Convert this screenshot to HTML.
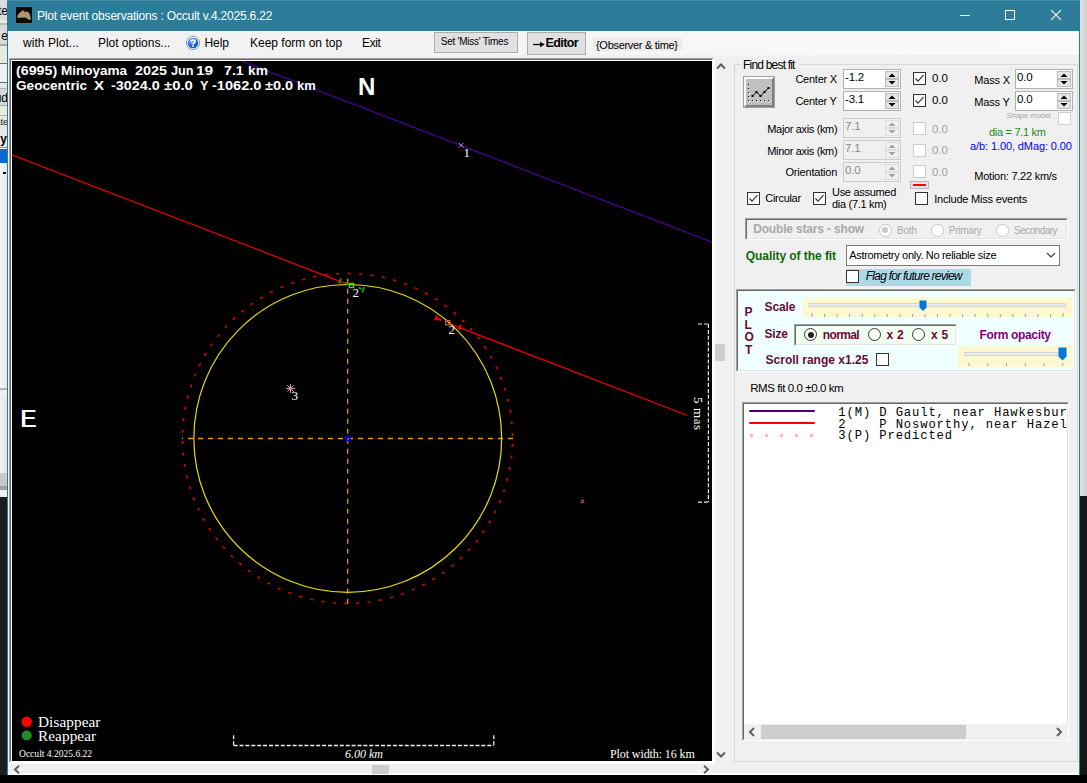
<!DOCTYPE html>
<html><head><meta charset="utf-8"><title>Plot event observations</title>
<style>
html,body{margin:0;padding:0}
body{width:1087px;height:783px;position:relative;overflow:hidden;background:#000;font-family:"Liberation Sans",sans-serif}
.a{position:absolute}
.t{position:absolute;white-space:pre}
</style></head><body>
<div class="a" style="left:0px;top:0px;width:7px;height:783px;background:#1e1e1e"></div>
<div class="a" style="left:0px;top:0px;width:7px;height:20px;background:#dcdcdc"></div>
<div class="a" style="left:0px;top:20px;width:7px;height:3px;background:#e6eede"></div>
<div class="a" style="left:0px;top:23px;width:7px;height:2px;background:#b8b8b8"></div>
<div class="a" style="left:0px;top:25px;width:7px;height:19px;background:#dadada"></div>
<div class="a" style="left:0px;top:44px;width:7px;height:2px;background:#a8a8a8"></div>
<div class="a" style="left:0px;top:46px;width:7px;height:17px;background:#e4ecdc"></div>
<div class="a" style="left:0px;top:63px;width:7px;height:1px;background:#707070"></div>
<div class="a" style="left:0px;top:64px;width:7px;height:18px;background:#f0f0f0"></div>
<div class="a" style="left:0px;top:82px;width:7px;height:1px;background:#707070"></div>
<div class="a" style="left:0px;top:83px;width:7px;height:5px;background:#e4ecdc"></div>
<div class="a" style="left:0px;top:88px;width:7px;height:1px;background:#b0b0b0"></div>
<div class="a" style="left:0px;top:89px;width:7px;height:16px;background:#d6d6d6"></div>
<div class="a" style="left:0px;top:105px;width:7px;height:1px;background:#a8a8a8"></div>
<div class="a" style="left:0px;top:106px;width:7px;height:9px;background:#e4ecdc"></div>
<div class="a" style="left:0px;top:115px;width:7px;height:1px;background:#b0b0b0"></div>
<div class="a" style="left:0px;top:116px;width:7px;height:15px;background:#e6e6e6"></div>
<div class="a" style="left:0px;top:131px;width:7px;height:16px;background:#e8e8e8"></div>
<div class="a" style="left:0px;top:147px;width:7px;height:1px;background:#909090"></div>
<div class="a" style="left:0px;top:148px;width:7px;height:1px;background:#fff"></div>
<div class="a" style="left:0px;top:149px;width:7px;height:14px;background:#0a68d0"></div>
<div class="a" style="left:0px;top:163px;width:7px;height:225px;background:linear-gradient(to right,#f4f4f4,#e6e6e6)"></div>
<div class="a" style="left:0px;top:388px;width:7px;height:2px;background:#b0b0b0"></div>
<div class="a" style="left:0px;top:390px;width:7px;height:7px;background:#efefef"></div>
<div class="a" style="left:0px;top:397px;width:7px;height:76px;background:linear-gradient(to right,#f2f2f2,#e4e4e4)"></div>
<div class="a" style="left:0px;top:473px;width:7px;height:13px;background:#c8c8c8"></div>
<div class="a" style="left:0px;top:486px;width:7px;height:4px;background:#a0a0a0"></div>
<div class="a" style="left:0px;top:490px;width:7px;height:7px;background:#f0f0f0"></div>
<div class="a" style="left:0;top:0;width:7px;height:150px;overflow:hidden"><div class="t" style="right:-1px;top:5px;font:12px/12px 'Liberation Sans';color:#000">te</div><div class="t" style="right:-1px;top:30px;font:12px/12px 'Liberation Sans';color:#000">e</div><div class="t" style="right:-1px;top:92px;font:12px/12px 'Liberation Sans';color:#000">ud</div><div class="t" style="right:-1px;top:118px;font:9px/9px 'Liberation Sans';color:#222">ate</div><div class="t" style="right:0px;top:133px;font:bold 12px/12px 'Liberation Sans';color:#000">y</div></div>
<div class="a" style="left:3px;top:172px;width:3px;height:2px;background:#111"></div>
<div class="a" style="left:1080px;top:0px;width:7px;height:496px;background:linear-gradient(to right,#e2e2e2,#cfcfcf)"></div>
<div class="a" style="left:1080px;top:496px;width:7px;height:287px;background:#161616"></div>
<div class="a" style="left:0px;top:775px;width:1087px;height:8px;background:#000"></div>
<div class="a" style="left:7px;top:0px;width:1073px;height:775px;background:#f0f0f0;border-left:1px solid #2b7b9b;border-right:1px solid #2b7b9b;box-sizing:border-box"></div>
<div class="a" style="left:7px;top:0px;width:1073px;height:31px;background:#2d7c9a"></div>
<div class="a" style="left:7px;top:0px;width:1073px;height:1px;background:#4a8fab"></div>
<svg class="a" style="left:16px;top:7px" width="16" height="16" viewBox="0 0 16 16">
<rect width="16" height="16" fill="#0e0b07"/>
<path d="M1.2 9.6 C1.8 7.8 3 6.2 4.5 5.2 C5.5 4.4 6.3 3.4 7 3.3 C7.8 3.4 8.1 4.5 8.6 5.1 C9.5 4.6 11.2 4.4 12.3 5.2 C13.4 6.2 14.2 8.5 14.6 10.6 C14.9 12 14.6 13 13.8 12.9 C12.5 12.6 11 11.5 9.8 10.8 C8.8 10.7 8 10.5 7 10.6 C5 10.6 3.2 11.2 2.2 10.8 C1.6 10.5 1.1 10.2 1.2 9.6 Z" fill="#b29470"/>
</svg>
<div class="t" style="left:37.00px;top:10.30px;font:normal 400 12px 'Liberation Sans';line-height:12px;color:#fff;letter-spacing:-0.190px;">Plot event observations : Occult v.4.2025.6.22</div>
<div class="a" style="left:960px;top:15px;width:10px;height:1px;background:#fff"></div>
<div class="a" style="left:1005px;top:10px;width:10px;height:10px;border:1px solid #fff;box-sizing:border-box"></div>
<svg class="a" style="left:1051px;top:10px" width="10" height="10" viewBox="0 0 10 10"><path d="M0 0 L10 10 M10 0 L0 10" stroke="#fff" stroke-width="1.1"/></svg>
<div class="a" style="left:8px;top:31px;width:1071px;height:24px;background:linear-gradient(to right,#f0f0f0,#fafafa)"></div>
<div class="a" style="left:8px;top:31px;width:1071px;height:1px;background:#fff"></div>
<div class="t" style="left:23.00px;top:37.00px;font:normal 400 12px 'Liberation Sans';line-height:12px;color:#000;letter-spacing:0.050px;">with Plot...</div>
<div class="t" style="left:98.00px;top:37.00px;font:normal 400 12px 'Liberation Sans';line-height:12px;color:#000;letter-spacing:-0.030px;">Plot options...</div>
<svg class="a" style="left:186px;top:36px" width="14" height="14" viewBox="0 0 14 14">
<defs><radialGradient id="hg" cx="0.4" cy="0.3" r="0.8"><stop offset="0" stop-color="#8fb8ff"/><stop offset="0.6" stop-color="#2a62d8"/><stop offset="1" stop-color="#1040a8"/></radialGradient></defs>
<circle cx="7" cy="7" r="6.6" fill="#fff" stroke="#5a84d0" stroke-width="0.8"/>
<circle cx="7" cy="7" r="5.3" fill="url(#hg)"/>
<path d="M5 5.4 C5 3.6 9 3.6 9 5.4 C9 6.8 7 6.9 7 8.4" stroke="#fff" stroke-width="1.5" fill="none"/>
<rect x="6.2" y="9.4" width="1.6" height="1.6" fill="#fff"/>
</svg>
<div class="t" style="left:204.50px;top:37.00px;font:normal 400 12px 'Liberation Sans';line-height:12px;color:#000;letter-spacing:-0.100px;">Help</div>
<div class="t" style="left:250.00px;top:37.00px;font:normal 400 12px 'Liberation Sans';line-height:12px;color:#000;letter-spacing:0.000px;">Keep form on top</div>
<div class="t" style="left:362.00px;top:37.00px;font:normal 400 12px 'Liberation Sans';line-height:12px;color:#000;letter-spacing:-0.350px;">Exit</div>
<div class="a" style="left:434px;top:32px;width:84px;height:21px;background:#e1e1e1;border:1px solid #adadad;box-sizing:border-box"></div>
<div class="t" style="left:440.80px;top:37.30px;font:normal 400 10px 'Liberation Sans';line-height:10px;color:#000;letter-spacing:-0.266px;">Set 'Miss' Times</div>
<div class="a" style="left:527px;top:32px;width:59px;height:23px;background:#e1e1e1;border:1px solid #adadad;box-sizing:border-box"></div>
<svg class="a" style="left:533px;top:41px" width="13" height="7" viewBox="0 0 13 7"><path d="M0 3.5 H9" stroke="#000" stroke-width="1.3"/><path d="M7 0.8 L11.8 3.5 L7 6.2 Z" fill="#000"/></svg>
<div class="t" style="left:545.60px;top:37.17px;font:normal 700 12.5px 'Liberation Sans';line-height:12.5px;color:#000;letter-spacing:-0.609px;">Editor</div>
<div class="a" style="left:593px;top:38px;width:89px;height:13px;background:#ececec"></div>
<div class="t" style="left:596.00px;top:39.85px;font:normal 400 11px 'Liberation Sans';line-height:11px;color:#000;letter-spacing:-0.300px;">{Observer &amp; time}</div>
<div class="a" style="left:9px;top:58px;width:706px;height:706px;background:#fff"></div>
<div class="a" style="left:9px;top:58px;width:704px;height:1px;background:#a0a0a0"></div>
<div class="a" style="left:9px;top:58px;width:1px;height:704px;background:#a0a0a0"></div>
<div class="a" style="left:10px;top:59px;width:702px;height:1px;background:#696969"></div>
<div class="a" style="left:10px;top:59px;width:1px;height:702px;background:#696969"></div>
<div class="a" style="left:12px;top:61px;width:700px;height:700px;background:#000"></div>
<svg class="a" style="left:716px;top:62px" width="10" height="8" viewBox="0 0 10 8"><path d="M1 6.5 L5 2.5 L9 6.5" stroke="#606060" stroke-width="2" fill="none"/></svg>
<div class="a" style="left:715px;top:344px;width:10px;height:17px;background:#cdcdcd"></div>
<svg class="a" style="left:716px;top:751px" width="10" height="8" viewBox="0 0 10 8"><path d="M1 1.5 L5 5.5 L9 1.5" stroke="#606060" stroke-width="2" fill="none"/></svg>
<div class="a" style="left:8px;top:773px;width:1071px;height:2px;background:#fff"></div>
<svg class="a" style="left:13px;top:765px" width="8" height="9" viewBox="0 0 8 9"><path d="M6 0.8 L2 4.5 L6 8.2" stroke="#606060" stroke-width="2" fill="none"/></svg>
<div class="a" style="left:372px;top:765px;width:17px;height:9px;background:#cdcdcd"></div>
<svg class="a" style="left:702px;top:765px" width="8" height="9" viewBox="0 0 8 9"><path d="M2 0.8 L6 4.5 L2 8.2" stroke="#606060" stroke-width="2" fill="none"/></svg>
<svg class="a" style="left:12px;top:61px" width="700" height="700" viewBox="12 61 700 700"><line x1="230" y1="56.65" x2="720" y2="245.16" stroke="#5000a0" stroke-width="1.1"/><line x1="0" y1="150.17" x2="344.5" y2="283.11" stroke="#f00000" stroke-width="1.2"/><line x1="448" y1="323.05" x2="687.6" y2="415.51" stroke="#f00000" stroke-width="1.3"/><circle cx="347.5" cy="438.4" r="165" fill="none" stroke="#e00000" stroke-width="1.6" stroke-dasharray="3 8.519" stroke-dashoffset="-5.6"/><circle cx="347.75" cy="438.4" r="153.9" fill="none" stroke="#e8dc00" stroke-width="1.2"/><path d="M513 438.5 L182 438.5" stroke="#e89a10" stroke-width="1.3" stroke-dasharray="5 5"/><path d="M347.7 603.7 L347.7 273.7" stroke="#e89a10" stroke-width="1.3" stroke-dasharray="5 5"/><circle cx="347.7" cy="438.5" r="2.2" fill="none" stroke="#0000ff" stroke-width="1.7"/><path d="M344.5 282.4 L349 284.8" stroke="#1a9a1a" stroke-width="1.5"/><path d="M341 278.4 L339 283.4" stroke="#1a9a1a" stroke-width="1.8"/><path d="M358.5 287.5 L362 289.2 M364.4 287 L362.2 292.6" stroke="#1a9a1a" stroke-width="1.8"/><rect x="349.4" y="283.4" width="4.2" height="4.2" fill="none" stroke="#10ff10" stroke-width="1.2"/><rect x="350.8" y="285" width="2" height="1.2" fill="#ff2000"/><path d="M436.8 315.5 L435.4 320.5 M435.6 318.2 L441.4 320" stroke="#ff0000" stroke-width="2"/><path d="M460.7 324.8 L459 329.8" stroke="#ff0000" stroke-width="2"/><rect x="445.6" y="320.6" width="4.4" height="4.2" fill="none" stroke="#c85a40" stroke-width="1.2"/><path d="M458.8 142.9 L463.6 147.7 M463.6 142.9 L458.8 147.7" stroke="#a8a8a8" stroke-width="1"/><path d="M286 388.4 H295 M290.4 384 V393 M287.2 385.2 L293.6 391.6 M293.6 385.2 L287.2 391.6" stroke="#b8b8b8" stroke-width="1"/><circle cx="290.4" cy="388.4" r="1.9" fill="#ff6ab0"/><circle cx="582.5" cy="501.4" r="1.4" fill="none" stroke="#ff6ab0" stroke-width="0.9"/><path d="M698 324 H708.4 M708.4 324 V502.1 M698 502.1 H708.4" fill="none" stroke="#e8e8e8" stroke-width="1.2" stroke-dasharray="4 1.9"/><path d="M233.6 735.3 V745.5 M233.6 745.5 H493.8 M493.8 735.3 V745.5" fill="none" stroke="#f0f0f0" stroke-width="1.3" stroke-dasharray="4 1.9"/><circle cx="26.7" cy="721.7" r="5.2" fill="#ff0000"/><circle cx="26.7" cy="735.5" r="5.1" fill="#228b22"/></svg>
<div class="t" style="left:15.60px;top:64.50px;font:normal 700 12px 'Liberation Sans';line-height:12px;color:#fff;letter-spacing:0.000px;transform:scaleX(1.1876);transform-origin:0 0;">(6995)</div>
<div class="t" style="left:60.80px;top:64.50px;font:normal 700 12px 'Liberation Sans';line-height:12px;color:#fff;letter-spacing:0.000px;transform:scaleX(1.1270);transform-origin:0 0;">Minoyama</div>
<div class="t" style="left:134.90px;top:64.50px;font:normal 700 12px 'Liberation Sans';line-height:12px;color:#fff;letter-spacing:0.000px;transform:scaleX(1.1990);transform-origin:0 0;">2025</div>
<div class="t" style="left:170.90px;top:64.50px;font:normal 700 12px 'Liberation Sans';line-height:12px;color:#fff;letter-spacing:0.000px;transform:scaleX(1.0569);transform-origin:0 0;">Jun</div>
<div class="t" style="left:195.60px;top:64.50px;font:normal 700 12px 'Liberation Sans';line-height:12px;color:#fff;letter-spacing:0.000px;transform:scaleX(1.2871);transform-origin:0 0;">19</div>
<div class="t" style="left:223.80px;top:64.50px;font:normal 700 12px 'Liberation Sans';line-height:12px;color:#fff;letter-spacing:0.000px;transform:scaleX(1.1818);transform-origin:0 0;">7.1</div>
<div class="t" style="left:248.10px;top:64.50px;font:normal 700 12px 'Liberation Sans';line-height:12px;color:#fff;letter-spacing:0.000px;transform:scaleX(1.1455);transform-origin:0 0;">km</div>
<div class="t" style="left:15.90px;top:80.10px;font:normal 700 12px 'Liberation Sans';line-height:12px;color:#fff;letter-spacing:0.000px;transform:scaleX(1.1331);transform-origin:0 0;">Geocentric</div>
<div class="t" style="left:93.90px;top:80.10px;font:normal 700 12px 'Liberation Sans';line-height:12px;color:#fff;letter-spacing:0.000px;transform:scaleX(1.2625);transform-origin:0 0;">X</div>
<div class="t" style="left:110.60px;top:80.10px;font:normal 700 12px 'Liberation Sans';line-height:12px;color:#fff;letter-spacing:0.000px;transform:scaleX(1.1968);transform-origin:0 0;">-3024.0</div>
<div class="t" style="left:163.50px;top:80.10px;font:normal 700 12px 'Liberation Sans';line-height:12px;color:#fff;letter-spacing:0.000px;transform:scaleX(1.2376);transform-origin:0 0;">±0.0</div>
<div class="t" style="left:199.50px;top:80.10px;font:normal 700 12px 'Liberation Sans';line-height:12px;color:#fff;letter-spacing:0.000px;transform:scaleX(1.0500);transform-origin:0 0;">Y</div>
<div class="t" style="left:212.10px;top:80.10px;font:normal 700 12px 'Liberation Sans';line-height:12px;color:#fff;letter-spacing:0.000px;transform:scaleX(1.2139);transform-origin:0 0;">-1062.0</div>
<div class="t" style="left:265.00px;top:80.10px;font:normal 700 12px 'Liberation Sans';line-height:12px;color:#fff;letter-spacing:0.000px;transform:scaleX(1.2122);transform-origin:0 0;">±0.0</div>
<div class="t" style="left:296.80px;top:80.10px;font:normal 700 12px 'Liberation Sans';line-height:12px;color:#fff;letter-spacing:0.000px;transform:scaleX(1.0795);transform-origin:0 0;">km</div>
<div class="t" style="left:358.25px;top:75.65px;font:normal 700 23px 'Liberation Sans';line-height:23px;color:#fff;letter-spacing:0.000px;transform:scaleX(1.0467);transform-origin:0 0;">N</div>
<div class="t" style="left:20.36px;top:407.65px;font:normal 400 23px 'Liberation Sans';line-height:23px;color:#fff;letter-spacing:0.000px;transform:scaleX(1.0357);transform-origin:0 0;text-shadow:0.9px 0 0 #fff;">E</div>
<div class="t" style="left:463.50px;top:146.11px;font:normal 400 13px 'Liberation Serif';line-height:13px;color:#fff;letter-spacing:0.000px;">1</div>
<div class="t" style="left:291.50px;top:389.21px;font:normal 400 13px 'Liberation Serif';line-height:13px;color:#fff;letter-spacing:0.000px;">3</div>
<div class="t" style="left:352.50px;top:286.11px;font:normal 400 13px 'Liberation Serif';line-height:13px;color:#fff;letter-spacing:0.000px;">2</div>
<div class="t" style="left:448.60px;top:323.01px;font:normal 400 13px 'Liberation Serif';line-height:13px;color:#fff;letter-spacing:0.000px;">2</div>
<div class="t" style="left:38.00px;top:714.30px;font:normal 400 15.3px 'Liberation Serif';line-height:15.3px;color:#fff;letter-spacing:0.050px;">Disappear</div>
<div class="t" style="left:38.00px;top:728.20px;font:normal 400 15.3px 'Liberation Serif';line-height:15.3px;color:#fff;letter-spacing:0.050px;">Reappear</div>
<div class="t" style="left:19.20px;top:748.47px;font:normal 400 11px 'Liberation Serif';line-height:11px;color:#fff;letter-spacing:0.000px;transform:scaleX(0.8673);transform-origin:0 0;">Occult 4.2025.6.22</div>
<div class="t" style="left:345.00px;top:747.74px;font:italic 400 12px 'Liberation Serif';line-height:12px;color:#fff;letter-spacing:0.000px;">6.00 km</div>
<div class="t" style="left:610.00px;top:747.74px;font:normal 400 12px 'Liberation Serif';line-height:12px;color:#fff;letter-spacing:-0.100px;">Plot width: 16 km</div>
<div class="t" style="left:692px;top:397px;width:12px;height:34px;"><div style="position:absolute;left:12px;top:0;transform-origin:0 0;transform:rotate(90deg);font:13px/12px 'Liberation Serif';color:#fff;white-space:pre;letter-spacing:0.6px">5 mas</div></div>
<div class="a" style="left:734px;top:64px;width:1px;height:698px;background:#d8d8d8"></div>
<div class="a" style="left:734px;top:64px;width:344px;height:1px;background:#d8d8d8"></div>
<div class="a" style="left:1077px;top:64px;width:1px;height:698px;background:#d8d8d8"></div>
<div class="a" style="left:734px;top:761px;width:344px;height:1px;background:#d8d8d8"></div>
<div class="a" style="left:741px;top:58px;width:58px;height:12px;background:#f0f0f0"></div>
<div class="t" style="left:743.10px;top:58.80px;font:normal 400 12px 'Liberation Sans';line-height:12px;color:#000;letter-spacing:-0.808px;">Find best fit</div>
<svg class="a" style="left:743px;top:76px" width="32" height="32" viewBox="0 0 32 32">
<rect width="32" height="32" fill="#a0a0a0"/><rect x="1" y="1" width="30" height="30" fill="#fff"/>
<path d="M31 1 V31 H1 L3 29 H29 V3 Z" fill="#808080"/><rect x="3" y="3" width="26" height="26" fill="#c0c0c0"/>
<rect x="5" y="8" width="1" height="1" fill="#000"/><rect x="6" y="9" width="1" height="1" fill="#fff"/><rect x="5" y="12" width="1" height="1" fill="#000"/><rect x="6" y="13" width="1" height="1" fill="#fff"/><rect x="5" y="16" width="1" height="1" fill="#000"/><rect x="6" y="17" width="1" height="1" fill="#fff"/><rect x="5" y="20" width="1" height="1" fill="#000"/><rect x="6" y="21" width="1" height="1" fill="#fff"/><rect x="5" y="24" width="1" height="1" fill="#000"/><rect x="6" y="25" width="1" height="1" fill="#fff"/><rect x="9" y="24" width="1" height="1" fill="#000"/><rect x="10" y="25" width="1" height="1" fill="#fff"/><rect x="13" y="24" width="1" height="1" fill="#000"/><rect x="14" y="25" width="1" height="1" fill="#fff"/><rect x="17" y="24" width="1" height="1" fill="#000"/><rect x="18" y="25" width="1" height="1" fill="#fff"/><rect x="21" y="24" width="1" height="1" fill="#000"/><rect x="22" y="25" width="1" height="1" fill="#fff"/><rect x="25" y="24" width="1" height="1" fill="#000"/><rect x="26" y="25" width="1" height="1" fill="#fff"/><path d="M9.5 20 L13.5 16 L17.5 20 L21.5 16 L25.5 12" stroke="#000" stroke-width="1" fill="none"/><rect x="8.5" y="19" width="2" height="2" fill="#000"/><rect x="12.5" y="15" width="2" height="2" fill="#000"/><rect x="16.5" y="19" width="2" height="2" fill="#000"/><rect x="20.5" y="15" width="2" height="2" fill="#000"/><rect x="24.5" y="11" width="2" height="2" fill="#000"/>
</svg>
<div class="t" style="left:795.40px;top:74.45px;font:normal 400 11px 'Liberation Sans';line-height:11px;color:#000;letter-spacing:-0.250px;">Center X</div>
<div class="t" style="left:795.40px;top:96.45px;font:normal 400 11px 'Liberation Sans';line-height:11px;color:#000;letter-spacing:-0.250px;">Center Y</div>
<div class="a" style="left:843px;top:69px;width:58px;height:20px;box-sizing:border-box;border:1px solid #b0b0b0;background:#fff"></div>
<div class="a" style="left:885px;top:71px;width:14px;height:8px;box-sizing:border-box;background:#e6e6e6;border:1px solid #bcbcbc"></div>
<div class="a" style="left:885px;top:79px;width:14px;height:8px;box-sizing:border-box;background:#e6e6e6;border:1px solid #bcbcbc"></div>
<svg class="a" style="left:888px;top:72px" width="8" height="14" viewBox="0 0 8 14"><path d="M0.5 5 L4 1.5 L7.5 5 Z M0.5 9 L4 12.5 L7.5 9 Z" fill="#000"/></svg>
<div class="t" style="left:845.00px;top:72.42px;font:normal 400 11.5px 'Liberation Sans';line-height:11.5px;color:#000;letter-spacing:-0.200px;">-1.2</div>
<div class="a" style="left:843px;top:91px;width:58px;height:20px;box-sizing:border-box;border:1px solid #b0b0b0;background:#fff"></div>
<div class="a" style="left:885px;top:93px;width:14px;height:8px;box-sizing:border-box;background:#e6e6e6;border:1px solid #bcbcbc"></div>
<div class="a" style="left:885px;top:101px;width:14px;height:8px;box-sizing:border-box;background:#e6e6e6;border:1px solid #bcbcbc"></div>
<svg class="a" style="left:888px;top:94px" width="8" height="14" viewBox="0 0 8 14"><path d="M0.5 5 L4 1.5 L7.5 5 Z M0.5 9 L4 12.5 L7.5 9 Z" fill="#000"/></svg>
<div class="t" style="left:845.00px;top:94.42px;font:normal 400 11.5px 'Liberation Sans';line-height:11.5px;color:#000;letter-spacing:-0.200px;">-3.1</div>
<div class="t" style="left:767.30px;top:123.95px;font:normal 400 11px 'Liberation Sans';line-height:11px;color:#000;letter-spacing:-0.350px;">Major axis (km)</div>
<div class="t" style="left:767.30px;top:145.65px;font:normal 400 11px 'Liberation Sans';line-height:11px;color:#000;letter-spacing:-0.350px;">Minor axis (km)</div>
<div class="t" style="left:785.50px;top:167.05px;font:normal 400 11px 'Liberation Sans';line-height:11px;color:#000;letter-spacing:-0.200px;">Orientation</div>
<div class="a" style="left:843px;top:118px;width:58px;height:20px;box-sizing:border-box;border:1px solid #cccccc;background:#f0f0f0"></div>
<div class="a" style="left:885px;top:120px;width:14px;height:8px;box-sizing:border-box;background:#f0f0f0;border:1px solid #dcdcdc"></div>
<div class="a" style="left:885px;top:128px;width:14px;height:8px;box-sizing:border-box;background:#f0f0f0;border:1px solid #dcdcdc"></div>
<svg class="a" style="left:888px;top:121px" width="8" height="14" viewBox="0 0 8 14"><path d="M0.5 5 L4 1.5 L7.5 5 Z M0.5 9 L4 12.5 L7.5 9 Z" fill="#a0a0a0"/></svg>
<div class="t" style="left:845.00px;top:121.42px;font:normal 400 11.5px 'Liberation Sans';line-height:11.5px;color:#8a8a8a;letter-spacing:-0.200px;">7.1</div>
<div class="a" style="left:843px;top:140px;width:58px;height:20px;box-sizing:border-box;border:1px solid #cccccc;background:#f0f0f0"></div>
<div class="a" style="left:885px;top:142px;width:14px;height:8px;box-sizing:border-box;background:#f0f0f0;border:1px solid #dcdcdc"></div>
<div class="a" style="left:885px;top:150px;width:14px;height:8px;box-sizing:border-box;background:#f0f0f0;border:1px solid #dcdcdc"></div>
<svg class="a" style="left:888px;top:143px" width="8" height="14" viewBox="0 0 8 14"><path d="M0.5 5 L4 1.5 L7.5 5 Z M0.5 9 L4 12.5 L7.5 9 Z" fill="#a0a0a0"/></svg>
<div class="t" style="left:845.00px;top:143.42px;font:normal 400 11.5px 'Liberation Sans';line-height:11.5px;color:#8a8a8a;letter-spacing:-0.200px;">7.1</div>
<div class="a" style="left:843px;top:162px;width:58px;height:20px;box-sizing:border-box;border:1px solid #cccccc;background:#f0f0f0"></div>
<div class="a" style="left:885px;top:164px;width:14px;height:8px;box-sizing:border-box;background:#f0f0f0;border:1px solid #dcdcdc"></div>
<div class="a" style="left:885px;top:172px;width:14px;height:8px;box-sizing:border-box;background:#f0f0f0;border:1px solid #dcdcdc"></div>
<svg class="a" style="left:888px;top:165px" width="8" height="14" viewBox="0 0 8 14"><path d="M0.5 5 L4 1.5 L7.5 5 Z M0.5 9 L4 12.5 L7.5 9 Z" fill="#a0a0a0"/></svg>
<div class="t" style="left:845.00px;top:165.42px;font:normal 400 11.5px 'Liberation Sans';line-height:11.5px;color:#8a8a8a;letter-spacing:-0.200px;">0.0</div>
<div class="a" style="left:913px;top:72px;width:13px;height:13px;box-sizing:border-box;border:1px solid #333;background:#fff"></div>
<svg class="a" style="left:913px;top:72px" width="13" height="13" viewBox="0 0 13 13"><path d="M2.5 6.5 L5 9.2 L10.5 3.2" stroke="#333" stroke-width="1.2" fill="none"/></svg>
<div class="a" style="left:913px;top:94px;width:13px;height:13px;box-sizing:border-box;border:1px solid #333;background:#fff"></div>
<svg class="a" style="left:913px;top:94px" width="13" height="13" viewBox="0 0 13 13"><path d="M2.5 6.5 L5 9.2 L10.5 3.2" stroke="#333" stroke-width="1.2" fill="none"/></svg>
<div class="t" style="left:932.00px;top:73.42px;font:normal 400 11.5px 'Liberation Sans';line-height:11.5px;color:#000;letter-spacing:-0.100px;">0.0</div>
<div class="t" style="left:932.00px;top:95.42px;font:normal 400 11.5px 'Liberation Sans';line-height:11.5px;color:#000;letter-spacing:-0.100px;">0.0</div>
<div class="a" style="left:913px;top:122px;width:13px;height:13px;box-sizing:border-box;border:1px solid #cccccc;background:#fff"></div>
<div class="a" style="left:913px;top:144px;width:13px;height:13px;box-sizing:border-box;border:1px solid #cccccc;background:#fff"></div>
<div class="a" style="left:913px;top:165px;width:13px;height:13px;box-sizing:border-box;border:1px solid #cccccc;background:#fff"></div>
<div class="t" style="left:932.00px;top:123.53px;font:normal 400 11.5px 'Liberation Sans';line-height:11.5px;color:#a0a0a0;letter-spacing:-0.100px;">0.0</div>
<div class="t" style="left:932.00px;top:145.22px;font:normal 400 11.5px 'Liberation Sans';line-height:11.5px;color:#a0a0a0;letter-spacing:-0.100px;">0.0</div>
<div class="t" style="left:932.00px;top:166.82px;font:normal 400 11.5px 'Liberation Sans';line-height:11.5px;color:#a0a0a0;letter-spacing:-0.100px;">0.0</div>
<div class="t" style="left:974.30px;top:74.85px;font:normal 400 11px 'Liberation Sans';line-height:11px;color:#000;letter-spacing:-0.200px;">Mass X</div>
<div class="t" style="left:974.30px;top:96.85px;font:normal 400 11px 'Liberation Sans';line-height:11px;color:#000;letter-spacing:-0.200px;">Mass Y</div>
<div class="a" style="left:1015px;top:69px;width:58px;height:20px;box-sizing:border-box;border:1px solid #b0b0b0;background:#fff"></div>
<div class="a" style="left:1057px;top:71px;width:14px;height:8px;box-sizing:border-box;background:#e6e6e6;border:1px solid #bcbcbc"></div>
<div class="a" style="left:1057px;top:79px;width:14px;height:8px;box-sizing:border-box;background:#e6e6e6;border:1px solid #bcbcbc"></div>
<svg class="a" style="left:1060px;top:72px" width="8" height="14" viewBox="0 0 8 14"><path d="M0.5 5 L4 1.5 L7.5 5 Z M0.5 9 L4 12.5 L7.5 9 Z" fill="#000"/></svg>
<div class="t" style="left:1017.00px;top:72.42px;font:normal 400 11.5px 'Liberation Sans';line-height:11.5px;color:#000;letter-spacing:-0.200px;">0.0</div>
<div class="a" style="left:1015px;top:91px;width:58px;height:20px;box-sizing:border-box;border:1px solid #b0b0b0;background:#fff"></div>
<div class="a" style="left:1057px;top:93px;width:14px;height:8px;box-sizing:border-box;background:#e6e6e6;border:1px solid #bcbcbc"></div>
<div class="a" style="left:1057px;top:101px;width:14px;height:8px;box-sizing:border-box;background:#e6e6e6;border:1px solid #bcbcbc"></div>
<svg class="a" style="left:1060px;top:94px" width="8" height="14" viewBox="0 0 8 14"><path d="M0.5 5 L4 1.5 L7.5 5 Z M0.5 9 L4 12.5 L7.5 9 Z" fill="#000"/></svg>
<div class="t" style="left:1017.00px;top:94.42px;font:normal 400 11.5px 'Liberation Sans';line-height:11.5px;color:#000;letter-spacing:-0.200px;">0.0</div>
<div class="t" style="left:1006.50px;top:111.90px;font:normal 400 8px 'Liberation Sans';line-height:8px;color:#a8a8a8;letter-spacing:-0.300px;">Shape model</div>
<div class="a" style="left:1058px;top:112px;width:13px;height:13px;box-sizing:border-box;border:1px solid #d0d0d0;background:#fff"></div>
<div class="t" style="left:989.00px;top:126.85px;font:normal 400 11px 'Liberation Sans';line-height:11px;color:#228b22;letter-spacing:-0.300px;">dia = 7.1 km</div>
<div class="t" style="left:970.00px;top:140.55px;font:normal 400 11px 'Liberation Sans';line-height:11px;color:#0000ff;letter-spacing:-0.100px;">a/b: 1.00, dMag: 0.00</div>
<div class="t" style="left:974.30px;top:170.75px;font:normal 400 11px 'Liberation Sans';line-height:11px;color:#000;letter-spacing:-0.250px;">Motion: 7.22 km/s</div>
<div class="a" style="left:910px;top:181px;width:19px;height:8px;box-sizing:border-box;border:1px solid #b8b8b8;background:#e4e4e4"></div>
<div class="a" style="left:913px;top:184px;width:13px;height:2px;background:#ff0000"></div>
<div class="a" style="left:747px;top:192px;width:13px;height:13px;box-sizing:border-box;border:1px solid #333;background:#fff"></div>
<svg class="a" style="left:747px;top:192px" width="13" height="13" viewBox="0 0 13 13"><path d="M2.5 6.5 L5 9.2 L10.5 3.2" stroke="#333" stroke-width="1.2" fill="none"/></svg>
<div class="t" style="left:765.30px;top:193.45px;font:normal 400 11px 'Liberation Sans';line-height:11px;color:#000;letter-spacing:-0.300px;">Circular</div>
<div class="a" style="left:813px;top:192px;width:13px;height:13px;box-sizing:border-box;border:1px solid #333;background:#fff"></div>
<svg class="a" style="left:813px;top:192px" width="13" height="13" viewBox="0 0 13 13"><path d="M2.5 6.5 L5 9.2 L10.5 3.2" stroke="#333" stroke-width="1.2" fill="none"/></svg>
<div class="t" style="left:832.00px;top:186.65px;font:normal 400 11px 'Liberation Sans';line-height:11px;color:#000;letter-spacing:-0.300px;">Use assumed</div>
<div class="t" style="left:832.00px;top:199.45px;font:normal 400 11px 'Liberation Sans';line-height:11px;color:#000;letter-spacing:-0.300px;">dia (7.1 km)</div>
<div class="a" style="left:915px;top:192px;width:13px;height:13px;box-sizing:border-box;border:1px solid #333;background:#fff"></div>
<div class="t" style="left:934.20px;top:193.55px;font:normal 400 11px 'Liberation Sans';line-height:11px;color:#000;letter-spacing:-0.200px;">Include Miss events</div>
<div class="a" style="left:745px;top:218px;width:323px;height:22px;box-sizing:border-box;background:transparent;border:1px solid;border-color:#a0a0a0 #fff #fff #a0a0a0"></div>
<div class="a" style="left:746px;top:219px;width:321px;height:20px;box-sizing:border-box;border:1px solid;border-color:#696969 #e3e3e3 #e3e3e3 #696969"></div>
<div class="t" style="left:753.20px;top:222.80px;font:normal 700 12px 'Liberation Sans';line-height:12px;color:#a8a8a8;letter-spacing:-0.170px;">Double stars - show</div>
<div class="a" style="left:879px;top:224px;width:12.5px;height:12.5px;box-sizing:border-box;border:1px solid #c8c8c8;border-radius:50%;background:#fff"></div>
<div class="a" style="left:882.4px;top:227.4px;width:5.8px;height:5.8px;border-radius:50%;background:#c8c8c8"></div>
<div class="a" style="left:931px;top:224px;width:12.5px;height:12.5px;box-sizing:border-box;border:1px solid #c8c8c8;border-radius:50%;background:#fff"></div>
<div class="a" style="left:996px;top:224px;width:12.5px;height:12.5px;box-sizing:border-box;border:1px solid #c8c8c8;border-radius:50%;background:#fff"></div>
<div class="t" style="left:897.00px;top:225.70px;font:normal 400 10px 'Liberation Sans';line-height:10px;color:#a8a8a8;letter-spacing:-0.200px;">Both</div>
<div class="t" style="left:948.80px;top:225.70px;font:normal 400 10px 'Liberation Sans';line-height:10px;color:#a8a8a8;letter-spacing:-0.250px;">Primary</div>
<div class="t" style="left:1014.10px;top:225.70px;font:normal 400 10px 'Liberation Sans';line-height:10px;color:#a8a8a8;letter-spacing:-0.550px;">Secondary</div>
<div class="t" style="left:745.80px;top:249.60px;font:normal 700 12px 'Liberation Sans';line-height:12px;color:#0a6a0a;letter-spacing:-0.060px;">Quality of the fit</div>
<div class="a" style="left:846px;top:245px;width:214px;height:21px;box-sizing:border-box;border:1px solid #7a7a7a;background:#fff"></div>
<div class="t" style="left:849.20px;top:249.55px;font:normal 400 11px 'Liberation Sans';line-height:11px;color:#000;letter-spacing:-0.300px;">Astrometry only. No reliable size</div>
<svg class="a" style="left:1046px;top:252px" width="10" height="7" viewBox="0 0 10 7"><path d="M1 1 L5 5 L9 1" stroke="#333" stroke-width="1.1" fill="none"/></svg>
<div class="a" style="left:846px;top:269px;width:125px;height:17px;background:#add8e6"></div>
<div class="a" style="left:846px;top:270px;width:13px;height:13px;box-sizing:border-box;border:1px solid #333;background:#fff"></div>
<div class="t" style="left:865.80px;top:270.20px;font:italic 400 12px 'Liberation Sans';line-height:12px;color:#000;letter-spacing:-0.764px;">Flag for future review</div>
<div class="a" style="left:736px;top:289px;width:340px;height:83px;box-sizing:border-box;background:#f0ffff;border:1px solid;border-color:#a0a0a0 #fff #fff #a0a0a0"></div>
<div class="a" style="left:737px;top:290px;width:338px;height:81px;box-sizing:border-box;border:1px solid;border-color:#696969 #e3e3e3 #e3e3e3 #696969"></div>
<div class="t" style="left:744.50px;top:305.60px;font:normal 700 12px 'Liberation Sans';line-height:12px;color:#6a0a3a;letter-spacing:0.000px;">P</div>
<div class="t" style="left:744.50px;top:318.50px;font:normal 700 12px 'Liberation Sans';line-height:12px;color:#6a0a3a;letter-spacing:0.000px;">L</div>
<div class="t" style="left:744.50px;top:331.40px;font:normal 700 12px 'Liberation Sans';line-height:12px;color:#6a0a3a;letter-spacing:0.000px;">O</div>
<div class="t" style="left:745.00px;top:344.30px;font:normal 700 12px 'Liberation Sans';line-height:12px;color:#6a0a3a;letter-spacing:0.000px;">T</div>
<div class="t" style="left:764.50px;top:301.40px;font:normal 700 12px 'Liberation Sans';line-height:12px;color:#6a0a3a;letter-spacing:-0.100px;">Scale</div>
<div class="t" style="left:764.50px;top:327.50px;font:normal 700 12px 'Liberation Sans';line-height:12px;color:#6a0a3a;letter-spacing:-0.200px;">Size</div>
<div class="t" style="left:765.60px;top:353.60px;font:normal 700 12px 'Liberation Sans';line-height:12px;color:#6a0a3a;letter-spacing:0.000px;">Scroll range x1.25</div>
<div class="t" style="left:979.50px;top:328.60px;font:normal 700 12px 'Liberation Sans';line-height:12px;color:#800080;letter-spacing:-0.350px;">Form opacity</div>
<div class="a" style="left:803px;top:298px;width:269px;height:19px;background:#fdf8d2"></div>
<div class="a" style="left:808px;top:303px;width:258px;height:4px;box-sizing:border-box;background:#e7eaea;border:1px solid #d6d6d6"></div>
<svg class="a" style="left:803px;top:298px" width="269" height="19"><rect x="8.5" y="15" width="1" height="4" fill="#a0a0a0"/><rect x="21.0" y="16" width="1" height="3" fill="#a0a0a0"/><rect x="33.6" y="16" width="1" height="3" fill="#a0a0a0"/><rect x="46.1" y="16" width="1" height="3" fill="#a0a0a0"/><rect x="58.7" y="16" width="1" height="3" fill="#a0a0a0"/><rect x="71.2" y="16" width="1" height="3" fill="#a0a0a0"/><rect x="83.8" y="16" width="1" height="3" fill="#a0a0a0"/><rect x="96.4" y="16" width="1" height="3" fill="#a0a0a0"/><rect x="108.9" y="16" width="1" height="3" fill="#a0a0a0"/><rect x="121.5" y="16" width="1" height="3" fill="#a0a0a0"/><rect x="134.0" y="16" width="1" height="3" fill="#a0a0a0"/><rect x="146.5" y="16" width="1" height="3" fill="#a0a0a0"/><rect x="159.1" y="16" width="1" height="3" fill="#a0a0a0"/><rect x="171.6" y="16" width="1" height="3" fill="#a0a0a0"/><rect x="184.2" y="16" width="1" height="3" fill="#a0a0a0"/><rect x="196.8" y="16" width="1" height="3" fill="#a0a0a0"/><rect x="209.3" y="16" width="1" height="3" fill="#a0a0a0"/><rect x="221.8" y="16" width="1" height="3" fill="#a0a0a0"/><rect x="234.4" y="16" width="1" height="3" fill="#a0a0a0"/><rect x="247.0" y="16" width="1" height="3" fill="#a0a0a0"/><rect x="259.5" y="15" width="1" height="4" fill="#a0a0a0"/></svg>
<svg class="a" style="left:919px;top:300px" width="8" height="12" viewBox="0 0 8 12"><path d="M0.5 1.2 Q0.5 0.5 1.2 0.5 H6.8 Q7.5 0.5 7.5 1.2 V7.5 L4 11 L0.5 7.5 Z" fill="#0078d7"/></svg>
<div class="a" style="left:794px;top:324px;width:163px;height:22px;box-sizing:border-box;background:#f0fff0;border:1px solid;border-color:#a0a0a0 #fff #fff #a0a0a0"></div>
<div class="a" style="left:795px;top:325px;width:161px;height:20px;box-sizing:border-box;border:1px solid;border-color:#696969 #e3e3e3 #e3e3e3 #696969"></div>
<div class="a" style="left:804px;top:328px;width:13px;height:13px;box-sizing:border-box;border:1px solid #333;border-radius:50%;background:#fff"></div>
<div class="a" style="left:807.5px;top:331.5px;width:6.0px;height:6.0px;border-radius:50%;background:#222"></div>
<div class="t" style="left:822.70px;top:329.00px;font:normal 700 12px 'Liberation Sans';line-height:12px;color:#6a0a3a;letter-spacing:-0.600px;">normal</div>
<div class="a" style="left:868px;top:328px;width:13px;height:13px;box-sizing:border-box;border:1px solid #333;border-radius:50%;background:#fff"></div>
<div class="t" style="left:886.50px;top:329.00px;font:normal 700 12px 'Liberation Sans';line-height:12px;color:#6a0a3a;letter-spacing:0.300px;">x 2</div>
<div class="a" style="left:912px;top:328px;width:13px;height:13px;box-sizing:border-box;border:1px solid #333;border-radius:50%;background:#fff"></div>
<div class="t" style="left:931.00px;top:329.00px;font:normal 700 12px 'Liberation Sans';line-height:12px;color:#6a0a3a;letter-spacing:0.300px;">x 5</div>
<div class="a" style="left:876px;top:353px;width:13px;height:13px;box-sizing:border-box;border:1px solid #333;background:#fff"></div>
<div class="a" style="left:958px;top:346px;width:115px;height:21px;background:#fdf8d2"></div>
<div class="a" style="left:964px;top:352px;width:102px;height:4px;box-sizing:border-box;background:#e7eaea;border:1px solid #d6d6d6"></div>
<svg class="a" style="left:958px;top:346px" width="115" height="21"><rect x="10.5" y="17" width="1" height="3" fill="#a0a0a0"/><rect x="29.3" y="17" width="1" height="3" fill="#a0a0a0"/><rect x="48.0" y="17" width="1" height="3" fill="#a0a0a0"/><rect x="66.8" y="17" width="1" height="3" fill="#a0a0a0"/><rect x="85.5" y="17" width="1" height="3" fill="#a0a0a0"/><rect x="104.3" y="17" width="1" height="3" fill="#a0a0a0"/></svg>
<svg class="a" style="left:1058px;top:347px" width="9" height="14" viewBox="0 0 9 14"><path d="M0.5 1.2 Q0.5 0.5 1.2 0.5 H7.8 Q8.5 0.5 8.5 1.2 V9.5 L4.5 13.5 L0.5 9.5 Z" fill="#0078d7"/></svg>
<div class="t" style="left:750.20px;top:383.03px;font:normal 400 11.5px 'Liberation Sans';line-height:11.5px;color:#000;letter-spacing:-0.417px;">RMS fit 0.0 ±0.0 km</div>
<div class="a" style="left:742px;top:402px;width:327px;height:339px;box-sizing:border-box;background:#fff;border:1px solid;border-color:#a0a0a0 #fff #fff #a0a0a0"></div>
<div class="a" style="left:743px;top:403px;width:325px;height:337px;box-sizing:border-box;border:1px solid;border-color:#696969 #e3e3e3 #e3e3e3 #696969"></div>
<div class="a" style="left:749px;top:410px;width:66px;height:2px;background:#4b0082;border-radius:1px"></div>
<div class="a" style="left:749px;top:422px;width:66px;height:2px;background:#ff0000;border-radius:1px"></div>
<div class="a" style="left:749.5px;top:434.3px;width:3px;height:3px;box-sizing:border-box;border:0.8px solid #ff69b4;border-radius:50%"></div>
<div class="a" style="left:764.5px;top:434.3px;width:3px;height:3px;box-sizing:border-box;border:0.8px solid #ff69b4;border-radius:50%"></div>
<div class="a" style="left:779.5px;top:434.3px;width:3px;height:3px;box-sizing:border-box;border:0.8px solid #ff69b4;border-radius:50%"></div>
<div class="a" style="left:794.5px;top:434.3px;width:3px;height:3px;box-sizing:border-box;border:0.8px solid #ff69b4;border-radius:50%"></div>
<div class="a" style="left:809.5px;top:434.3px;width:3px;height:3px;box-sizing:border-box;border:0.8px solid #ff69b4;border-radius:50%"></div>
<div class="a" style="left:744px;top:403px;width:324px;height:337px;overflow:hidden">
<div class="t" style="left:94.29999999999995px;top:3.73px;font:12.2px/12.2px 'Liberation Mono';letter-spacing:0.88px;color:#000">1(M) D Gault, near Hawkesbury</div>
<div class="t" style="left:94.29999999999995px;top:15.58px;font:12.2px/12.2px 'Liberation Mono';letter-spacing:0.88px;color:#000">2    P Nosworthy, near Hazelbrook</div>
<div class="t" style="left:94.29999999999995px;top:27.43px;font:12.2px/12.2px 'Liberation Mono';letter-spacing:0.88px;color:#000">3(P) Predicted</div>
</div>
<div class="a" style="left:744px;top:724px;width:324px;height:16px;background:#f0f0f0"></div>
<div class="a" style="left:761px;top:725px;width:205px;height:14px;background:#cdcdcd"></div>
<svg class="a" style="left:748px;top:727px" width="8" height="10" viewBox="0 0 8 10"><path d="M6 1 L2 5 L6 9" stroke="#606060" stroke-width="2" fill="none"/></svg>
<svg class="a" style="left:1055px;top:727px" width="8" height="10" viewBox="0 0 8 10"><path d="M2 1 L6 5 L2 9" stroke="#606060" stroke-width="2" fill="none"/></svg>
</body></html>
